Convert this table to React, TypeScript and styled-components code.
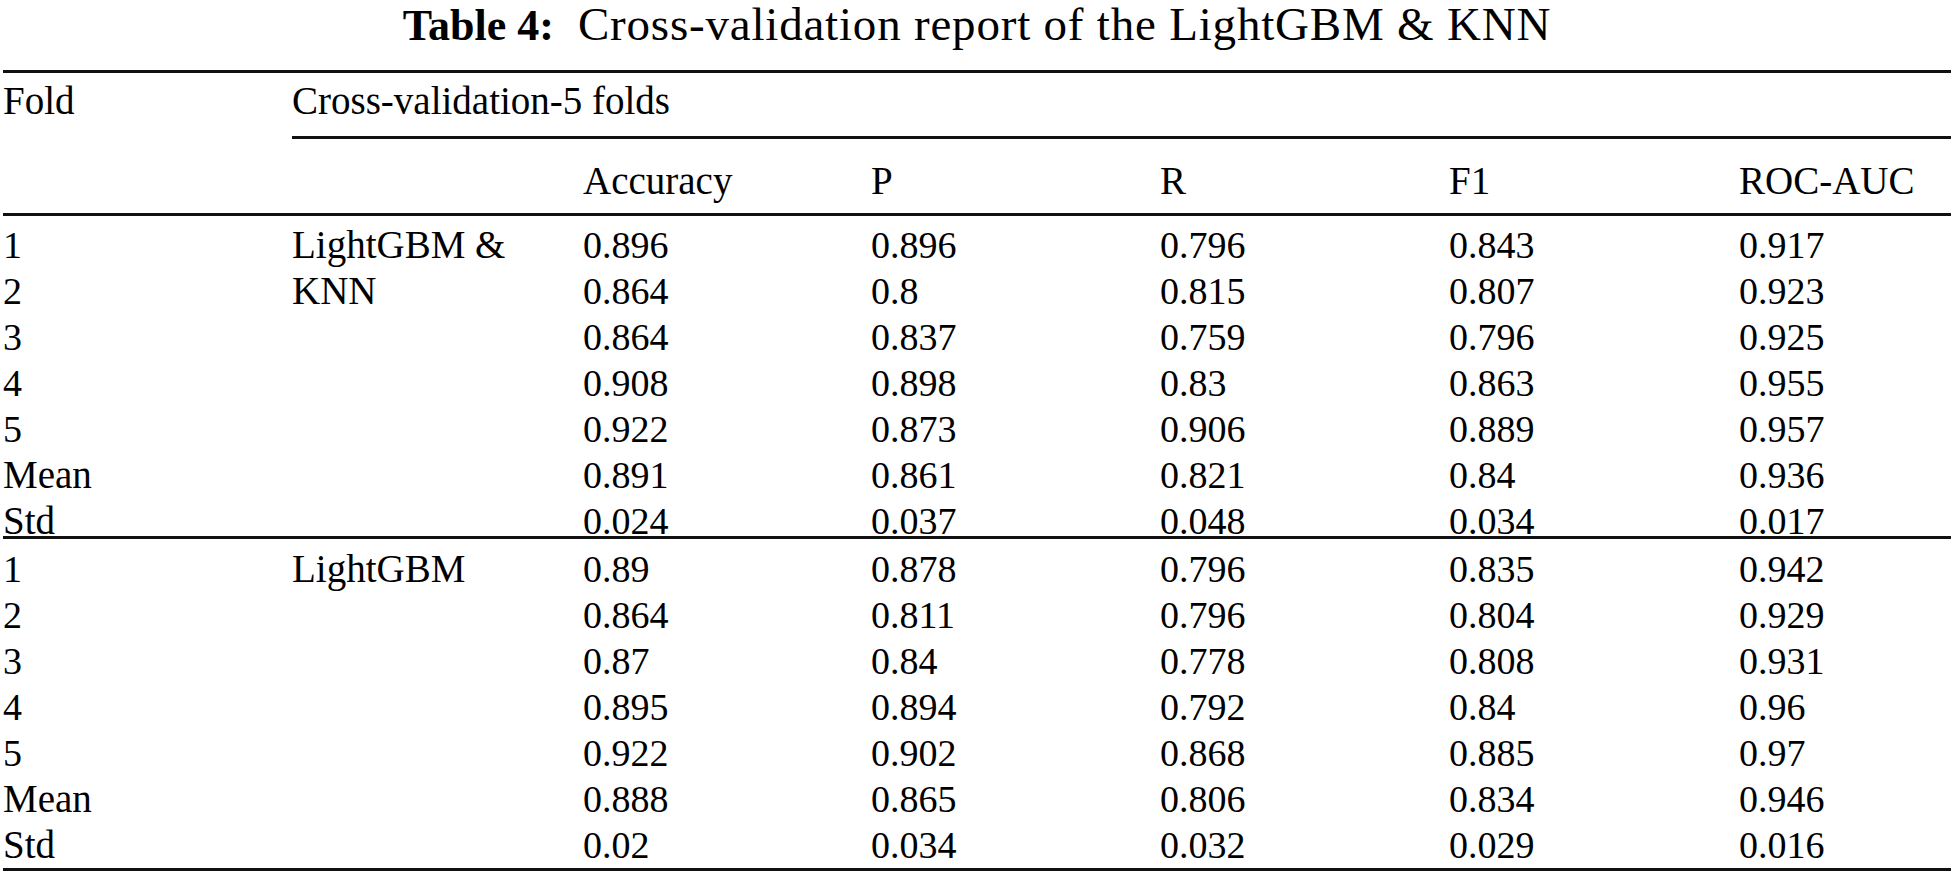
import React from 'react';
import styled, { createGlobalStyle } from 'styled-components';

const GlobalStyle = createGlobalStyle`
  html, body {
    margin: 0;
    padding: 0;
    background: #fff;
  }
  body {
    font-family: 'Liberation Serif', 'Times New Roman', serif;
    color: #000;
  }
`;

const COLUMNS = '289px 291px 288px 289px 289px 290px 1fr';
const RULE = '3px solid #111';

type Group = {
  model: string;
  rows: string[][];
};

const groups: Group[] = [
  {
    model: 'LightGBM & KNN',
    rows: [
      ['1', '0.896', '0.896', '0.796', '0.843', '0.917'],
      ['2', '0.864', '0.8', '0.815', '0.807', '0.923'],
      ['3', '0.864', '0.837', '0.759', '0.796', '0.925'],
      ['4', '0.908', '0.898', '0.83', '0.863', '0.955'],
      ['5', '0.922', '0.873', '0.906', '0.889', '0.957'],
      ['Mean', '0.891', '0.861', '0.821', '0.84', '0.936'],
      ['Std', '0.024', '0.037', '0.048', '0.034', '0.017'],
    ],
  },
  {
    model: 'LightGBM',
    rows: [
      ['1', '0.89', '0.878', '0.796', '0.835', '0.942'],
      ['2', '0.864', '0.811', '0.796', '0.804', '0.929'],
      ['3', '0.87', '0.84', '0.778', '0.808', '0.931'],
      ['4', '0.895', '0.894', '0.792', '0.84', '0.96'],
      ['5', '0.922', '0.902', '0.868', '0.885', '0.97'],
      ['Mean', '0.888', '0.865', '0.806', '0.834', '0.946'],
      ['Std', '0.02', '0.034', '0.032', '0.029', '0.016'],
    ],
  },
];

const metrics = ['Accuracy', 'P', 'R', 'F1', 'ROC-AUC'];

const Page = styled.div`
  width: 1954px;
  padding: 0 3px;
  box-sizing: border-box;
`;

const Caption = styled.h2`
  margin: 0;
  font-size: 47px;
  line-height: 48px;
  font-weight: normal;
  text-align: center;
  letter-spacing: 0.8px;
  white-space: nowrap;

  b {
    font-size: 44px;
    font-weight: bold;
    letter-spacing: 0;
    margin-right: 24px;
  }
`;

const Table = styled.div`
  margin-top: 20px;
  border-top: ${RULE};
  border-bottom: ${RULE};
  font-size: 38px;
  line-height: 46px;
`;

const HeadTop = styled.div`
  display: grid;
  grid-template-columns: ${COLUMNS};
  padding-top: 5px;
`;

const SpanHead = styled.div`
  grid-column: 2 / -1;
  padding-bottom: 12px;
  border-bottom: ${RULE};
  white-space: nowrap;
  font-size: 39px;
`;

const HeadBottom = styled.div`
  display: grid;
  grid-template-columns: ${COLUMNS};
  padding: 19px 0 9px;
  border-bottom: ${RULE};
`;

const DataGroup = styled.div<{ $last?: boolean }>`
  display: grid;
  grid-template-columns: ${COLUMNS};
  grid-template-rows: ${(p) => (p.$last ? 'repeat(7, 46px)' : 'repeat(6, 46px) 38px')};
  padding-top: ${(p) => (p.$last ? '7px' : '6px')};
  border-bottom: ${(p) => (p.$last ? 'none' : RULE)};
`;

const Cell = styled.div<{ $word?: boolean }>`
  white-space: nowrap;
  height: 46px;
  font-size: ${(p) => (p.$word ? '39px' : '38px')};
`;

const ModelCell = styled.div`
  grid-column: 2;
  grid-row: 1 / span 7;
  align-self: start;
  font-size: 39px;
`;

const isWord = (v: string) => /[A-Za-z]/.test(v);

export default function App() {
  return (
    <>
      <GlobalStyle />
      <Page>
        <Caption>
          <b>Table 4:</b>Cross-validation report of the LightGBM &amp; KNN
        </Caption>
        <Table>
          <HeadTop>
            <Cell $word>Fold</Cell>
            <SpanHead>Cross-validation-5 folds</SpanHead>
          </HeadTop>
          <HeadBottom>
            <Cell />
            <Cell />
            {metrics.map((m) => (
              <Cell key={m} $word>
                {m}
              </Cell>
            ))}
          </HeadBottom>
          {groups.map((g, gi) => (
            <DataGroup key={g.model} $last={gi === groups.length - 1}>
              <ModelCell>{g.model}</ModelCell>
              {g.rows.map((row, ri) => (
                <React.Fragment key={ri}>
                  {row.map((v, ci) => (
                    <Cell key={ci} $word={isWord(v)}>
                      {v}
                    </Cell>
                  ))}
                </React.Fragment>
              ))}
            </DataGroup>
          ))}
        </Table>
      </Page>
    </>
  );
}
